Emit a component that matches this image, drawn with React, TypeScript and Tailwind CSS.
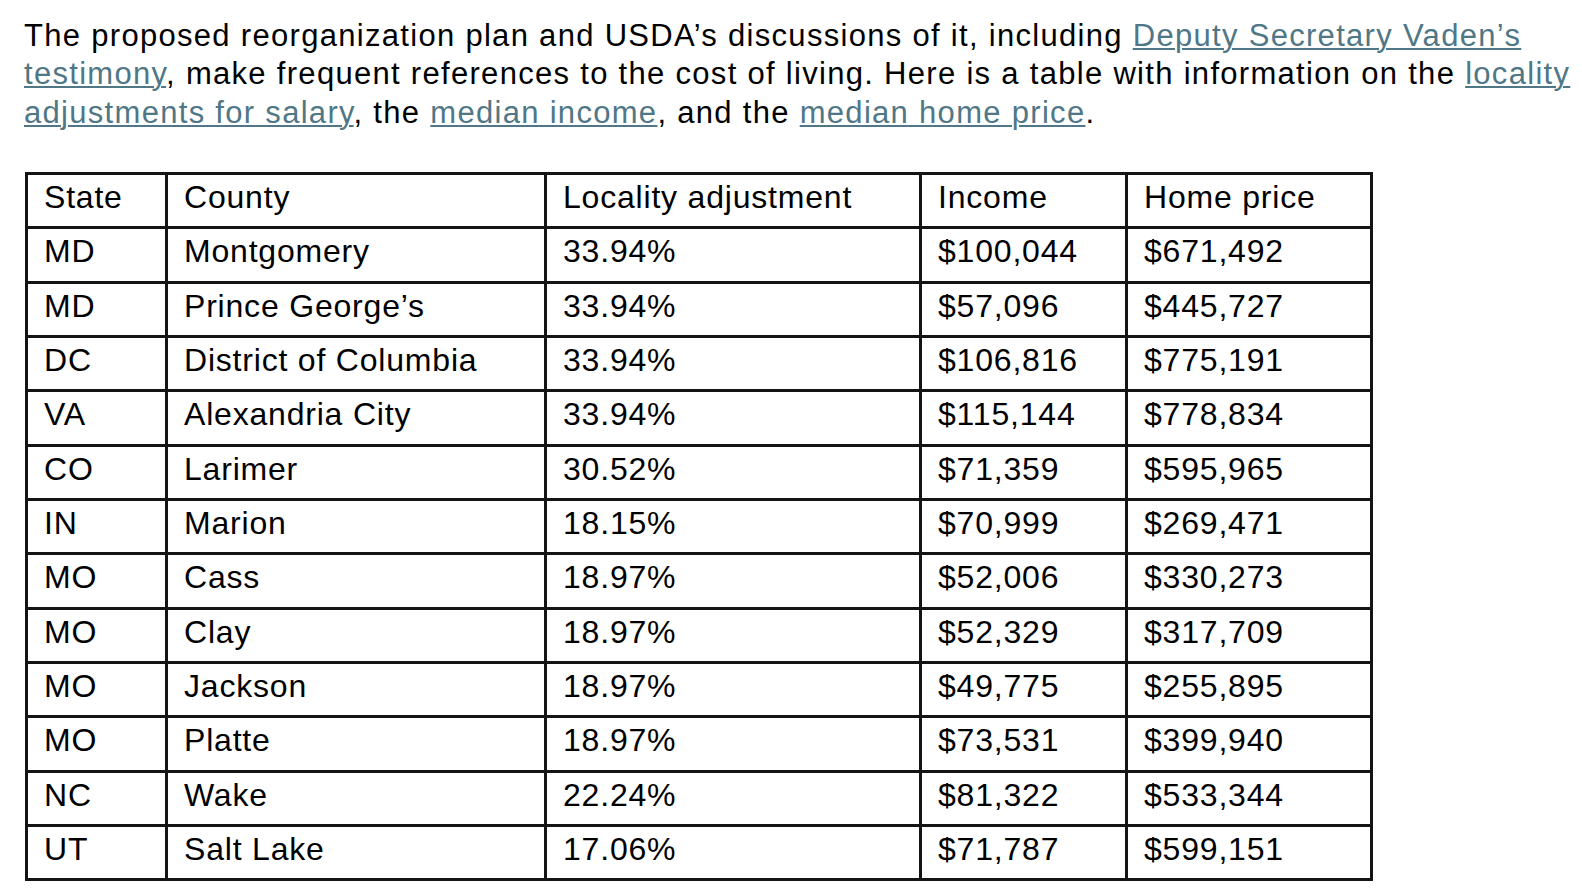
import type { ReactNode } from 'react'

type Row = [string, string, string, string, string]

const ROWS: Row[] = [
  ['MD', 'Montgomery', '33.94%', '$100,044', '$671,492'],
  ['MD', 'Prince George’s', '33.94%', '$57,096', '$445,727'],
  ['DC', 'District of Columbia', '33.94%', '$106,816', '$775,191'],
  ['VA', 'Alexandria City', '33.94%', '$115,144', '$778,834'],
  ['CO', 'Larimer', '30.52%', '$71,359', '$595,965'],
  ['IN', 'Marion', '18.15%', '$70,999', '$269,471'],
  ['MO', 'Cass', '18.97%', '$52,006', '$330,273'],
  ['MO', 'Clay', '18.97%', '$52,329', '$317,709'],
  ['MO', 'Jackson', '18.97%', '$49,775', '$255,895'],
  ['MO', 'Platte', '18.97%', '$73,531', '$399,940'],
  ['NC', 'Wake', '22.24%', '$81,322', '$533,344'],
  ['UT', 'Salt Lake', '17.06%', '$71,787', '$599,151'],
]

const HEADER: Row = ['State', 'County', 'Locality adjustment', 'Income', 'Home price']

function Link({ children }: { children: ReactNode }) {
  return (
    <a href="#" className="text-[#4f7786] underline decoration-2 underline-offset-[2px]">
      {children}
    </a>
  )
}

function Cell({ children }: { children: ReactNode }) {
  return (
    <td className="h-[54.35px] border-[3px] border-[#141414] pl-[16px] pt-[6px] align-top text-[32px] leading-[32px] tracking-[0.8px] whitespace-nowrap">
      {children}
    </td>
  )
}

export default function App() {
  return (
    <div className="min-h-screen bg-white text-black" style={{ fontFamily: '"Liberation Sans", Arial, Helvetica, sans-serif' }}>
      <p className="w-[1575px] pl-6 pt-[17px] text-[31px] leading-[38.3px] tracking-[1.3px] whitespace-nowrap">
        The proposed reorganization plan and USDA’s discussions of it, including <Link>Deputy Secretary Vaden’s</Link>
        <br />
        <Link>testimony</Link>, make frequent references to the cost of living. Here is a table with information on the <Link>locality</Link>
        <br />
        <Link>adjustments for salary</Link>, the <Link>median income</Link>, and the <Link>median home price</Link>.
      </p>

      <table className="ml-[25px] mt-[40px] w-[1345px] table-fixed border-collapse">
        <colgroup>
          <col className="w-[140px]" />
          <col className="w-[379px]" />
          <col className="w-[375px]" />
          <col className="w-[206px]" />
          <col className="w-[245px]" />
        </colgroup>
        <thead>
          <tr>
            {HEADER.map((h) => (
              <Cell key={h}>{h}</Cell>
            ))}
          </tr>
        </thead>
        <tbody>
          {ROWS.map((row, i) => (
            <tr key={i}>
              {row.map((value, j) => (
                <Cell key={j}>{value}</Cell>
              ))}
            </tr>
          ))}
        </tbody>
      </table>
    </div>
  )
}
